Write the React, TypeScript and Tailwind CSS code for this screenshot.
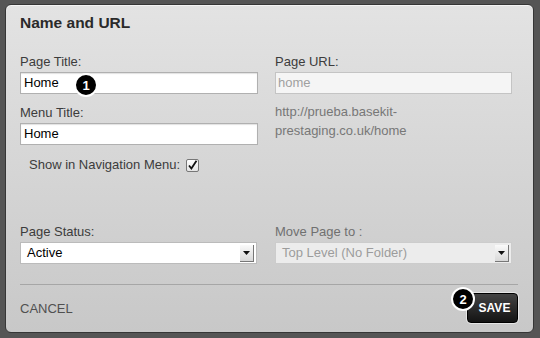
import React, { FC } from "react";

const font = { fontFamily: '"Liberation Sans", Arial, sans-serif' };

const Badge: FC<{ n: string; className: string }> = ({ n, className }) => (
  <span
    className={`absolute flex h-[24px] w-[24px] items-center justify-center rounded-full border-2 border-white bg-black text-[13px] font-bold leading-none text-white ${className}`}
  >
    {n}
  </span>
);

const SelectArrow: FC = () => (
  <span className="absolute right-[2px] top-[2px] flex h-[17px] w-[14px] items-center justify-center border-b border-r border-[#777] bg-gradient-to-b from-[#fafafa] to-[#d8d8d8]">
    <svg width="7" height="4" viewBox="0 0 7 4">
      <path d="M0 0h7L3.5 4z" fill="#111" />
    </svg>
  </span>
);

const App: FC = () => {
  return (
    <div className="h-[338px] w-[540px] overflow-hidden bg-[#555] pl-[5px] pt-[4px]" style={font}>
      <div className="flex h-[329px] w-[529px] flex-col rounded-[6px] border border-[#363636] bg-gradient-to-b from-[#e3e3e3] to-[#c8c8c8] pl-[14px] pr-[15px] pt-[9px] shadow-[inset_0_1px_0_#f4f4f4]">
        <h2 className="text-[15.5px] font-bold leading-[18px] text-[#2a2a2a]">Name and URL</h2>

        <div className="mt-[22px] grid grid-cols-[238px_237px] gap-x-[17px] text-[13px] leading-[16px] text-[#3c3c3c]">
          <div className="flex flex-col">
            <label className="mb-[2px]">Page Title:</label>
            <div className="relative h-[22px] border border-[#b0b0b0] bg-white pl-[3px] leading-[20px] text-black shadow-[inset_0_1px_1px_rgba(0,0,0,0.12)]">
              Home
              <Badge n="1" className="left-[53px] top-0" />
            </div>
            <label className="mb-[2px] mt-[11px]">Menu Title:</label>
            <div className="h-[22px] border border-[#b0b0b0] bg-white pl-[3px] leading-[20px] text-black shadow-[inset_0_1px_1px_rgba(0,0,0,0.12)]">
              Home
            </div>
            <div className="mt-[12px] flex items-center gap-[6px] pl-[9px]">
              <span>Show in Navigation Menu:</span>
              <span className="flex h-[13px] w-[13px] items-center justify-center rounded-[2px] border border-[#777] bg-gradient-to-b from-white to-[#e4e4e4]">
                <svg width="11" height="11" viewBox="0 0 11 11">
                  <path d="M2 5.5l2.4 3L9.5 0.8" fill="none" stroke="#111" strokeWidth="1.8" />
                </svg>
              </span>
            </div>
          </div>

          <div className="flex flex-col">
            <label className="mb-[2px]">Page URL:</label>
            <div className="h-[22px] border border-[#c4c4c4] bg-[#f5f5f5] pl-[2px] leading-[20px] text-[#a0a0a0]">
              home
            </div>
            <p className="mt-[8px] leading-[19px] text-[#777]">
              http://prueba.basekit-
              <br />
              prestaging.co.uk/home
            </p>
          </div>
        </div>

        <div className="mt-[51px] grid grid-cols-[237px_237px] gap-x-[18px] text-[13px] leading-[16px] text-[#3c3c3c]">
          <div className="flex flex-col">
            <label className="mb-[2px]">Page Status:</label>
            <div className="relative h-[22px] border border-[#bbb] bg-white pl-[6px] leading-[20px] text-black">
              Active
              <SelectArrow />
            </div>
          </div>
          <div className="flex flex-col">
            <label className="mb-[2px] text-[#707070]">Move Page to :</label>
            <div className="relative h-[22px] border border-[#ccc] bg-[#ececec] pl-[6px] leading-[20px] text-[#9c9c9c]">
              Top Level (No Folder)
              <SelectArrow />
            </div>
          </div>
        </div>

        <div className="mt-[20px] h-[2px] border-t border-[#a6a6a6] border-b-white/40" />

        <div className="mt-[7px] flex items-center justify-between">
          <span className="pt-[2px] text-[13px] text-[#505050]">CANCEL</span>
          <button className="relative h-[30px] w-[51px] rounded-[4px] border border-black bg-gradient-to-b from-[#444] to-[#141414] text-[12px] font-bold text-white shadow-[0_0_0_1px_#e6e6e6]">
            <span className="pl-[4px]">SAVE</span>
            <Badge n="2" className="-left-[17px] -top-[7px]" />
          </button>
        </div>
      </div>
    </div>
  );
};

export default App;
